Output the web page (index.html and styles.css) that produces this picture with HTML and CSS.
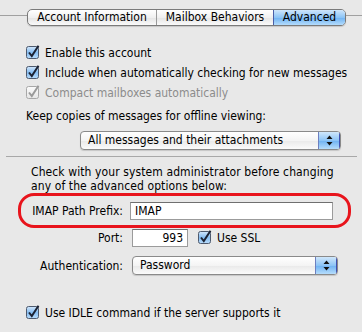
FILE: index.html
```html
<!DOCTYPE html>
<html lang="en">
<head>
    <meta charset="UTF-8">
    <title>Advanced</title>
    <link rel="stylesheet" href="styles.css">
</head>
<body>
    <svg width="0" height="0" class="defs">
        <defs>
            <linearGradient id="blueFill" x1="0" y1="0" x2="0" y2="1">
                <stop offset="0" stop-color="#d3e7fb"/>
                <stop offset="0.5" stop-color="#86bdf1"/>
                <stop offset="1" stop-color="#b9dcfb"/>
            </linearGradient>
            <linearGradient id="grayFill" x1="0" y1="0" x2="0" y2="1">
                <stop offset="0" stop-color="#fbfbfb"/>
                <stop offset="1" stop-color="#e6e6e6"/>
            </linearGradient>
            <symbol id="checkOn" viewBox="0 0 14 14">
                <rect x="0.5" y="1.5" width="12" height="12" rx="2" fill="url(#blueFill)" stroke="#4e5a6e"/>
                <path d="M3 7.5 L5.8 11 L12.5 0.8" fill="none" stroke="#1b2233" stroke-width="2"/>
            </symbol>
            <symbol id="checkOff" viewBox="0 0 14 14">
                <rect x="0.5" y="1.5" width="12" height="12" rx="2" fill="url(#grayFill)" stroke="#a8a8a8"/>
                <path d="M3 7.5 L5.8 11 L12.5 0.8" fill="none" stroke="#9a9a9a" stroke-width="2"/>
            </symbol>
        </defs>
    </svg>

    <div class="tabs-row">
        <span class="tab-line short"></span>
        <div class="tabs">
            <span class="tab first">Account Information</span>
            <span class="tab">Mailbox Behaviors</span>
            <span class="tab active">Advanced</span>
        </div>
        <span class="tab-line"></span>
    </div>

    <div class="checks">
        <label class="check"><svg class="box"><use href="#checkOn"/></svg>Enable this account</label>
        <label class="check"><svg class="box"><use href="#checkOn"/></svg>Include when automatically checking for new messages</label>
        <label class="check disabled"><svg class="box"><use href="#checkOff"/></svg>Compact mailboxes automatically</label>
    </div>

    <div class="note">Keep copies of messages for offline viewing:</div>

    <div class="popup wide">
        <span class="popup-text">All messages and their attachments</span>
        <span class="popup-arrows">
            <svg width="7" height="11" viewBox="0 0 7 11"><path d="M3.5 0.5 L6.5 4 L0.5 4 Z M3.5 10.5 L6.5 7 L0.5 7 Z" fill="#111"/></svg>
        </span>
    </div>

    <div class="separator"></div>

    <p class="warning">Check with your system administrator before changing<br>any of the advanced options below:</p>

    <div class="highlight">
        <div class="field-row">
            <span class="field-label">IMAP Path Prefix:</span>
            <span class="text-field prefix">IMAP</span>
        </div>
    </div>

    <div class="field-row plain">
        <span class="field-label">Port:</span>
        <span class="text-field port">993</span>
        <label class="check ssl"><svg class="box"><use href="#checkOn"/></svg>Use SSL</label>
    </div>

    <div class="field-row plain auth">
        <span class="field-label">Authentication:</span>
        <div class="popup narrow">
            <span class="popup-text">Password</span>
            <span class="popup-arrows">
                <svg width="7" height="11" viewBox="0 0 7 11"><path d="M3.5 0.5 L6.5 4 L0.5 4 Z M3.5 10.5 L6.5 7 L0.5 7 Z" fill="#111"/></svg>
            </span>
        </div>
    </div>

    <div class="checks last">
        <label class="check"><svg class="box"><use href="#checkOn"/></svg>Use IDLE command if the server supports it</label>
    </div>
</body>
</html>
```

FILE: styles.css
```css
body {
    margin: 0;
    background-color: #e8e8e8;
    font-family: "DejaVu Sans Condensed", "DejaVu Sans", sans-serif;
    font-size: 12px;
    color: #000;
    overflow: hidden;
    white-space: nowrap;
}

.defs {
    position: absolute;
}

.tabs-row {
    display: flex;
    align-items: flex-start;
    margin-top: 9px;
    height: 17px;
}

.tab-line {
    flex: 1;
    height: 1px;
    margin-top: 6px;
    background-color: #a0a0a0;
}

.tab-line.short {
    flex: 0 0 27px;
}

.tabs {
    display: flex;
    width: 319px;
    height: 17px;
    box-sizing: border-box;
    border: 1px solid #7a7a7a;
    border-radius: 5px;
    overflow: hidden;
    background: linear-gradient(#ffffff, #f0f0f0 50%, #e4e4e4 51%, #fafafa);
    box-shadow: 0 1px 1px rgba(0, 0, 0, 0.15);
}

.tab {
    display: flex;
    align-items: center;
    justify-content: center;
    height: 100%;
    border-left: 1px solid #9a9a9a;
    line-height: 15px;
}

.tab.first {
    border-left: none;
    width: 128px;
}

.tab:nth-child(2) {
    width: 116px;
}

.tab.active {
    flex: 1;
    border-left-color: #4a5ea8;
    background: linear-gradient(#cfe6fb, #8cc4f6 50%, #6db1f2 51%, #b4dcfc);
}

.checks {
    display: flex;
    flex-direction: column;
    margin-top: 17px;
    padding-left: 26px;
}

.check {
    display: flex;
    align-items: center;
    height: 20px;
    gap: 5px;
}

.box {
    width: 14px;
    height: 14px;
    flex: 0 0 14px;
    margin-top: -2px;
}

.check.disabled {
    color: #8c8c8c;
}

.note {
    margin-top: 3px;
    padding-left: 26px;
    line-height: 20px;
}

.popup {
    display: flex;
    align-items: stretch;
    height: 19px;
    box-sizing: border-box;
    border: 1px solid #8a8a8a;
    border-radius: 4px;
    overflow: hidden;
    background: linear-gradient(#ffffff, #f4f4f4 50%, #e9e9e9 51%, #fbfbfb);
    box-shadow: 0 1px 1px rgba(0, 0, 0, 0.15);
}

.popup.wide {
    width: 261px;
    margin: 5px 0 0 80px;
}

.popup.narrow {
    width: 206px;
}

.popup-text {
    flex: 1;
    padding-left: 7px;
    line-height: 17px;
}

.popup-arrows {
    display: flex;
    align-items: center;
    justify-content: center;
    width: 20px;
    border-left: 1px solid #6c7fc0;
    border-right: 1px solid #3e4fb0;
    background: linear-gradient(#d0e7fb, #8cc4f6 50%, #6db1f2 51%, #b6ddfc);
}

.separator {
    height: 1px;
    margin: 6px 5px 0 6px;
    background-color: #a8a8a8;
}

.warning {
    margin: 8px 0 0 31px;
    line-height: 14px;
    letter-spacing: 0.1px;
}

.highlight {
    margin: 0 11px 0 18px;
    height: 35px;
    box-sizing: border-box;
    border: 3px solid #e8141c;
    border-radius: 16px;
    display: flex;
    align-items: center;
}

.field-row {
    display: flex;
    align-items: center;
}

.field-label {
    width: 102px;
    text-align: right;
    margin-right: 7px;
}

.field-row.plain {
    padding-left: 21px;
}

.field-row.plain .field-label {
    margin-right: 9px;
}

.text-field {
    height: 18px;
    box-sizing: border-box;
    border: 1px solid #9b9b9b;
    border-top-color: #6f6f6f;
    background-color: #fff;
    line-height: 16px;
    padding: 0 4px;
}

.text-field.prefix {
    width: 203px;
}

.text-field.port {
    width: 56px;
    text-align: right;
}

.check.ssl {
    margin-left: 10px;
}

.field-row.auth {
    margin-top: 8px;
}

.checks.last {
    margin-top: 28px;
}
```
